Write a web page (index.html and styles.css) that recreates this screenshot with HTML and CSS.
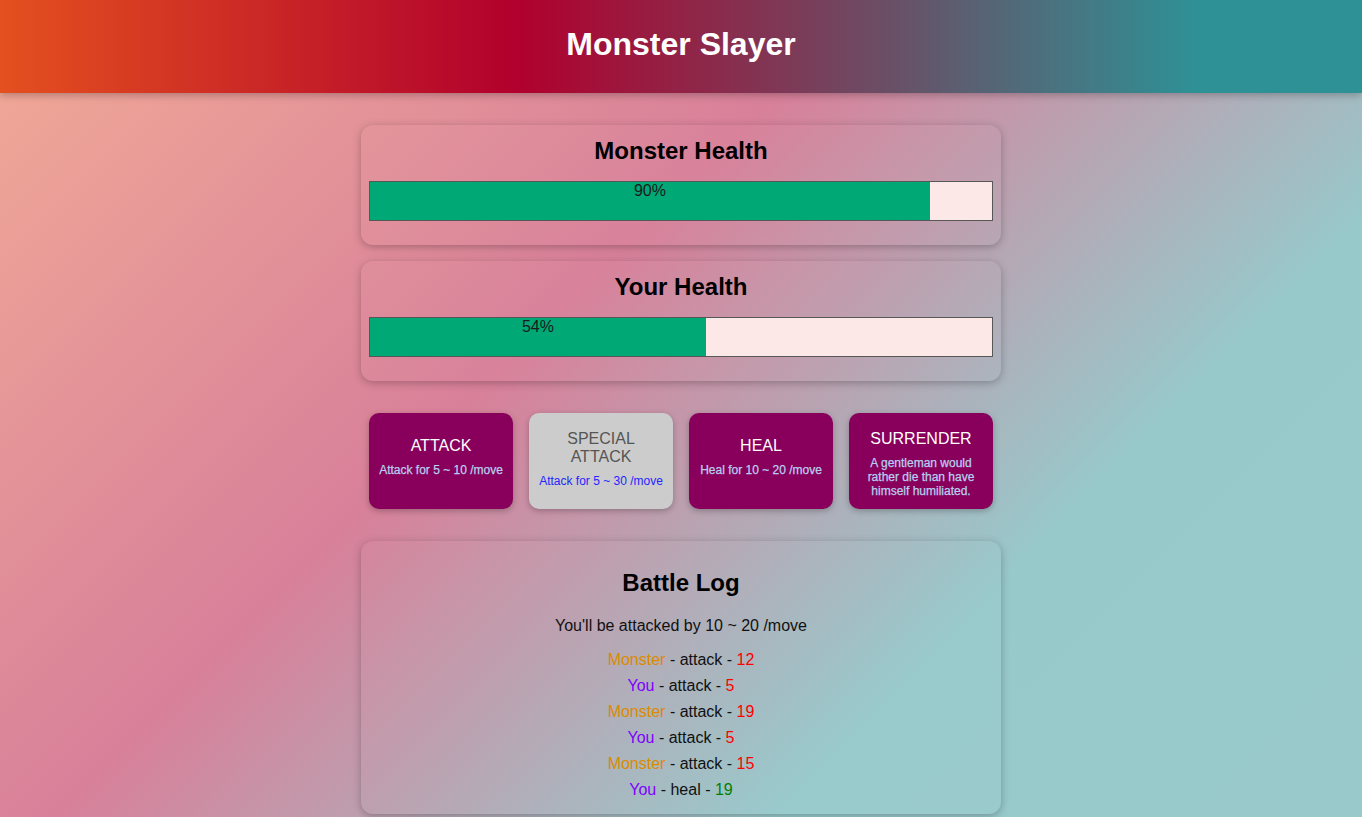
FILE: index.html
```html
<!DOCTYPE html>
<html lang="en">
<head>
<meta charset="utf-8">
<title>Monster Slayer</title>
<link rel="stylesheet" href="styles.css">
</head>
<body>
<header class="topbar">
  <h1 class="title">Monster Slayer</h1>
</header>
<main class="game">
  <section class="card health">
    <h2 class="card-title">Monster Health</h2>
    <div class="bar">
      <div class="fill" style="width: 90%">90%</div>
    </div>
  </section>
  <section class="card health">
    <h2 class="card-title">Your Health</h2>
    <div class="bar">
      <div class="fill" style="width: 54%">54%</div>
    </div>
  </section>
  <section class="actions">
    <button class="action">
      <span class="action-body">
        <span class="action-name">ATTACK</span>
        <span class="action-desc">Attack for 5 ~ 10 /move</span>
      </span>
    </button>
    <button class="action disabled" disabled>
      <span class="action-body">
        <span class="action-name">SPECIAL ATTACK</span>
        <span class="action-desc">Attack for 5 ~ 30 /move</span>
      </span>
    </button>
    <button class="action">
      <span class="action-body">
        <span class="action-name">HEAL</span>
        <span class="action-desc">Heal for 10 ~ 20 /move</span>
      </span>
    </button>
    <button class="action">
      <span class="action-body">
        <span class="action-name">SURRENDER</span>
        <span class="action-desc">A gentleman would rather die than have himself humiliated.</span>
      </span>
    </button>
  </section>
  <section class="card log">
    <h2 class="card-title">Battle Log</h2>
    <p class="intro">You'll be attacked by 10 ~ 20 /move</p>
    <ul class="entries">
      <li><span class="who-monster">Monster</span> - attack - <span class="dmg">12</span></li>
      <li><span class="who-you">You</span> - attack - <span class="dmg">5</span></li>
      <li><span class="who-monster">Monster</span> - attack - <span class="dmg">19</span></li>
      <li><span class="who-you">You</span> - attack - <span class="dmg">5</span></li>
      <li><span class="who-monster">Monster</span> - attack - <span class="dmg">15</span></li>
      <li><span class="who-you">You</span> - heal - <span class="heal">19</span></li>
    </ul>
  </section>
</main>
</body>
</html>
```
FILE: styles.css
```css
* { box-sizing: border-box; }
html, body { margin: 0; padding: 0; }
body {
  font-family: "Liberation Sans", Arial, sans-serif;
  min-height: 100vh;
  background: linear-gradient(135deg, #f2ab96 0%, #d8809a 40%, #97c9cb 73%, #99c9cb 100%);
  color: #111;
}
.topbar {
  height: 93px;
  display: flex;
  align-items: center;
  justify-content: center;
  background: linear-gradient(90deg, #e4501f 0%, #b1002d 38%, #2e9196 88%, #2e9196 100%);
  box-shadow: 0 2px 8px rgba(0, 0, 0, 0.26);
}
.title {
  margin: 0;
  color: #fff;
  font-size: 32px;
  font-weight: bold;
  line-height: 36px;
  transform: translateY(-3px);
}
.game {
  width: 640px;
  margin: 0 auto;
  padding-top: 32px;
  display: flex;
  flex-direction: column;
}
.card {
  border-radius: 12px;
  box-shadow: 0 2px 8px rgba(0, 0, 0, 0.26);
  background: rgba(255, 255, 255, 0.02);
  text-align: center;
}
.health {
  padding: 12px 8px 24px;
  margin-bottom: 16px;
}
.health + .health { margin-bottom: 32px; }
.card-title {
  margin: 0 0 16px;
  font-size: 24px;
  line-height: 28px;
  font-weight: bold;
  color: #000;
}
.bar {
  height: 40px;
  border: 1px solid #575757;
  background: #fde8e8;
  display: flex;
}
.fill {
  height: 100%;
  background: #00a876;
  font-size: 16px;
  line-height: 18px;
  text-align: center;
  color: #1a1a1a;
}
.actions {
  display: flex;
  gap: 16px;
  padding: 0 8px;
  margin-bottom: 32px;
}
.action {
  width: 144px;
  height: 96px;
  border: none;
  border-radius: 10px;
  background: #88005b;
  box-shadow: 0 2px 6px rgba(0, 0, 0, 0.26);
  display: flex;
  flex-direction: column;
  align-items: stretch;
  justify-content: flex-start;
  padding: 17px 8px 25px;
  font-family: "Liberation Sans", Arial, sans-serif;
  text-align: center;
  cursor: pointer;
}
.action-body {
  display: flex;
  flex-direction: column;
  align-items: center;
  margin: auto 0;
}
.action-name {
  color: #fff;
  font-size: 16px;
  line-height: 18px;
}
.action-desc {
  margin-top: 8px;
  color: #b6cff0;
  font-size: 12px;
  line-height: 14px;
  -webkit-text-stroke: 0.25px #b6cff0;
}
.disabled {
  background: #cccccc;
  cursor: not-allowed;
}
.disabled .action-name { color: #555; }
.disabled .action-desc { color: #2424ff; -webkit-text-stroke: 0; }
.log {
  padding: 28px 8px 11px;
}
.log .card-title { margin-bottom: 20px; }
.intro {
  margin: 0 0 12px;
  font-size: 16px;
  line-height: 18px;
}
.entries {
  list-style: none;
  margin: 0;
  padding: 0;
  font-size: 16px;
  line-height: 26px;
}
.who-monster { color: #dc8a00; }
.who-you { color: #7f00ff; }
.dmg { color: #ff0000; }
.heal { color: #008000; }
```
